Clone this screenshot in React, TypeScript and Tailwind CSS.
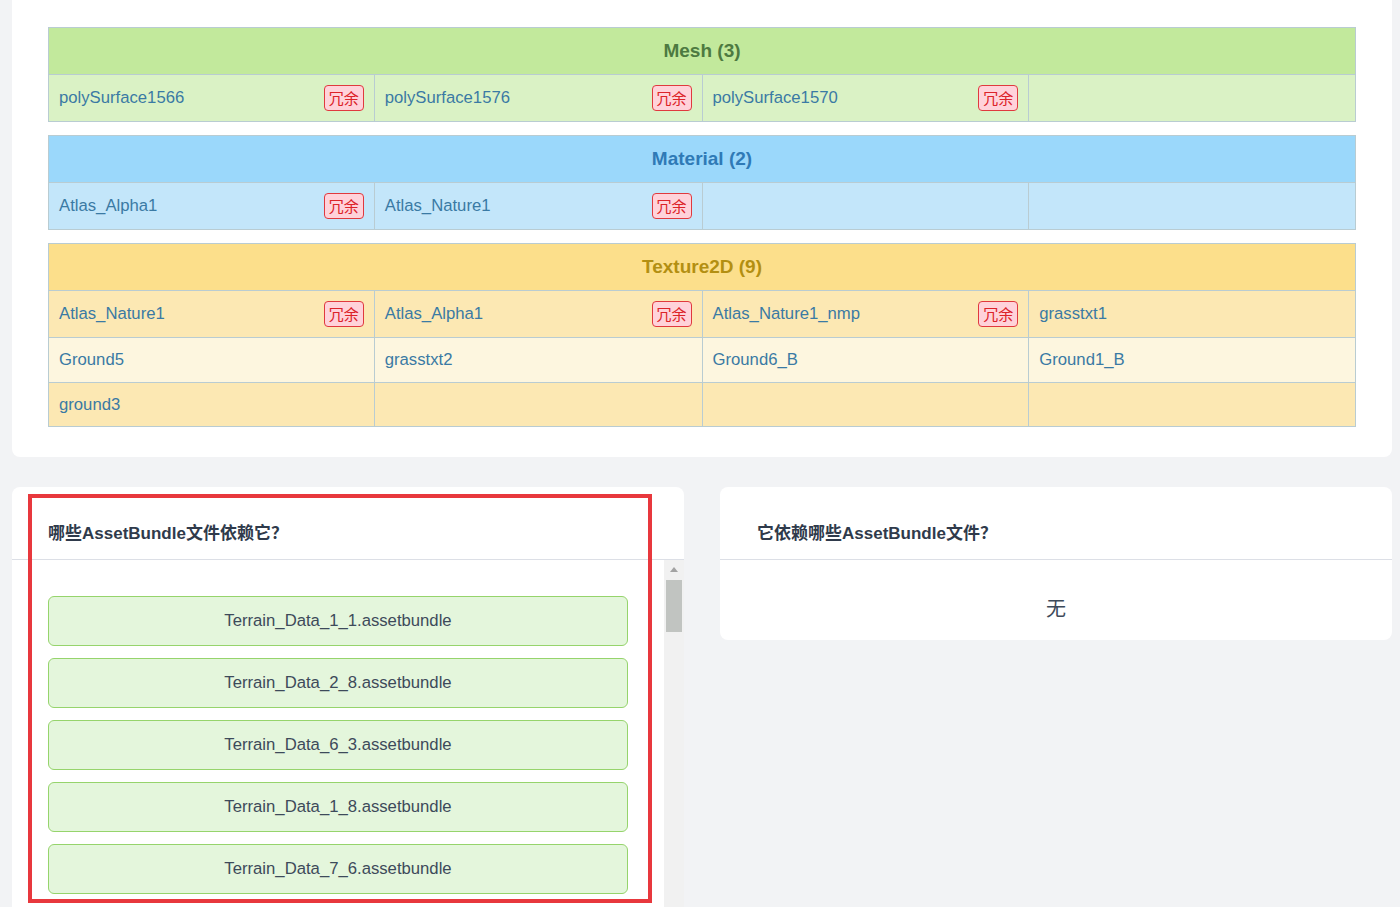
import React from "react";

type Cell = { name: string; dup?: boolean } | null;

const FONT = { fontFamily: '"Liberation Sans", Arial, "Noto Sans CJK SC", sans-serif' };
const CJK = { fontFamily: '"Noto Sans CJK SC", sans-serif' };

function Badge() {
  return (
    <span
      className="flex h-[26px] w-[40px] shrink-0 items-center justify-center rounded-[4px] border border-[#e0393e] bg-[#ffd2da] text-[15px] text-[#dc2329]"
      style={CJK}
    >
      冗余
    </span>
  );
}

function rowHeight(hasBadge: boolean, last: boolean) {
  if (hasBadge) return last ? "h-[46px]" : "h-[47px]";
  return last ? "h-[43px]" : "h-[45px]";
}

function Table({
  title,
  headerBg,
  headerText,
  rows,
  rowBgs,
}: {
  title: string;
  headerBg: string;
  headerText: string;
  rows: Cell[][];
  rowBgs: string[];
}) {
  return (
    <div className="border border-[#b9ccd2]">
      <div className={`flex h-[47px] items-center justify-center border-b border-[#b9ccd2] text-[19px] font-bold ${headerBg} ${headerText}`}>
        {title}
      </div>
      {rows.map((row, ri) => {
        const hasBadge = row.some((c) => c && c.dup);
        const last = ri === rows.length - 1;
        return (
          <div
            key={ri}
            className={`grid grid-cols-[325fr_328fr_327fr_327fr] ${rowBgs[ri]} ${!last ? "border-b border-[#b9ccd2]" : ""} ${rowHeight(hasBadge, last)}`}
          >
            {row.map((c, ci) => (
              <div
                key={ci}
                className={`flex items-center justify-between pl-[10px] pr-[10px] ${ci > 0 ? "border-l border-[#b9ccd2]" : ""}`}
              >
                <span className="text-[16.7px] text-[#3a7aa4]">{c ? c.name : ""}</span>
                {c && c.dup ? <Badge /> : null}
              </div>
            ))}
          </div>
        );
      })}
    </div>
  );
}

const bundles = [
  "Terrain_Data_1_1.assetbundle",
  "Terrain_Data_2_8.assetbundle",
  "Terrain_Data_6_3.assetbundle",
  "Terrain_Data_1_8.assetbundle",
  "Terrain_Data_7_6.assetbundle",
];

export default function App() {
  return (
    <div className="relative h-[907px] w-[1400px] overflow-hidden bg-[#f2f3f5]" style={FONT}>
      <div className="ml-[12px] flex w-[1380px] flex-col gap-[13px] rounded-b-[8px] bg-white px-[36px] pb-[30px] pt-[27px]">
        <Table
          title="Mesh (3)"
          headerBg="bg-[#c2e99c]"
          headerText="text-[#4d7a41]"
          rowBgs={["bg-[#daf2c5]"]}
          rows={[
            [
              { name: "polySurface1566", dup: true },
              { name: "polySurface1576", dup: true },
              { name: "polySurface1570", dup: true },
              null,
            ],
          ]}
        />
        <Table
          title="Material (2)"
          headerBg="bg-[#9bd8fb]"
          headerText="text-[#2f7ab6]"
          rowBgs={["bg-[#c3e6fa]"]}
          rows={[
            [
              { name: "Atlas_Alpha1", dup: true },
              { name: "Atlas_Nature1", dup: true },
              null,
              null,
            ],
          ]}
        />
        <Table
          title="Texture2D (9)"
          headerBg="bg-[#fcdf8b]"
          headerText="text-[#b38f12]"
          rowBgs={["bg-[#fce8b3]", "bg-[#fdf6df]", "bg-[#fce8b3]"]}
          rows={[
            [
              { name: "Atlas_Nature1", dup: true },
              { name: "Atlas_Alpha1", dup: true },
              { name: "Atlas_Nature1_nmp", dup: true },
              { name: "grasstxt1" },
            ],
            [{ name: "Ground5" }, { name: "grasstxt2" }, { name: "Ground6_B" }, { name: "Ground1_B" }],
            [{ name: "ground3" }, null, null, null],
          ]}
        />
      </div>

      <div className="ml-[12px] mt-[30px] flex items-start gap-[36px]">
        <div className="w-[672px] rounded-t-[8px] bg-white">
          <div className="flex h-[73px] items-center border-b border-[#dcdfe6] px-[36px] pt-[19px] text-[17px] font-bold text-[#2f3a4b]">
            <span>
              哪些AssetBundle文件依赖它<span style={CJK}>？</span>
            </span>
          </div>
          <div className="flex">
            <div className="flex h-[400px] w-[652px] flex-col gap-[12px] px-[36px] pt-[36px]">
              {bundles.map((b) => (
                <div
                  key={b}
                  className="flex h-[50px] shrink-0 items-center justify-center rounded-[6px] border border-[#96d46c] bg-[#e4f6dc] text-[16.7px] text-[#3d4a5a]"
                >
                  {b}
                </div>
              ))}
            </div>
            <div className="flex h-[400px] w-[20px] flex-col items-center bg-[#f1f1f1]">
              <div className="mt-[7px] h-0 w-0 border-b-[5px] border-l-[4px] border-r-[4px] border-b-[#a3a3a3] border-l-transparent border-r-transparent" />
              <div className="mt-[8px] h-[52px] w-[16px] bg-[#c1c4c1]" />
            </div>
          </div>
        </div>

        <div className="w-[672px] rounded-[8px] bg-white">
          <div className="flex h-[73px] items-center border-b border-[#dcdfe6] px-[37px] pt-[19px] text-[17px] font-bold text-[#2f3a4b]">
            <span>
              它依赖哪些AssetBundle文件<span style={CJK}>？</span>
            </span>
          </div>
          <div
            className="flex justify-center pb-[20px] pt-[36px] text-[20px] leading-[24px] text-[#3d4a5a]"
            style={CJK}
          >
            无
          </div>
        </div>
      </div>

      <div className="pointer-events-none absolute left-[28px] top-[494px] h-[409px] w-[624px] border-[4px] border-[#e8383d]" />
    </div>
  );
}
